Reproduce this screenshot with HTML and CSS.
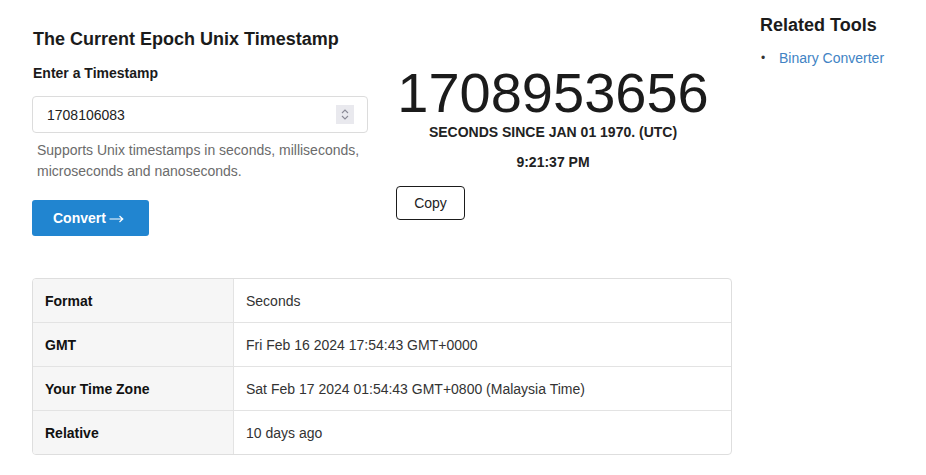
FILE: index.html
```html
<!DOCTYPE html>
<html lang="en">
<head>
<meta charset="utf-8">
<title>Epoch Unix Timestamp</title>
<link rel="stylesheet" href="styles.css">
</head>
<body>
<div class="page">
  <main class="main">
    <div class="top">
      <section class="left">
        <h1 class="title">The Current Epoch Unix Timestamp</h1>
        <label class="label" for="ts">Enter a Timestamp</label>
        <div class="input-wrap">
          <input id="ts" class="input" type="text" value="1708106083">
          <span class="spinner">
            <svg width="18" height="19" viewBox="0 0 18 19"><path d="M6 8 L9 5 L12 8" fill="none" stroke="#8a8a96" stroke-width="1.1"/><path d="M6 11 L9 14 L12 11" fill="none" stroke="#8a8a96" stroke-width="1.1"/></svg>
          </span>
        </div>
        <p class="help">Supports Unix timestamps in seconds, milliseconds, microseconds and nanoseconds.</p>
        <button class="convert">Convert <svg class="arrow" width="15" height="8" viewBox="0 0 15 8"><path d="M0.5 4 H13.5 M10.5 1 L13.8 4 L10.5 7" fill="none" stroke="#fff" stroke-width="1.2"/></svg></button>
      </section>
      <section class="center">
        <div class="big">1708953656</div>
        <div class="since">SECONDS SINCE JAN 01 1970. (UTC)</div>
        <div class="time">9:21:37 PM</div>
        <button class="copy">Copy</button>
      </section>
    </div>
    <table class="results">
      <tr><th>Format</th><td>Seconds</td></tr>
      <tr><th>GMT</th><td>Fri Feb 16 2024 17:54:43 GMT+0000</td></tr>
      <tr><th>Your Time Zone</th><td>Sat Feb 17 2024 01:54:43 GMT+0800 (Malaysia Time)</td></tr>
      <tr><th>Relative</th><td>10 days ago</td></tr>
    </table>
  </main>
  <aside class="side">
    <h2 class="side-title">Related Tools</h2>
    <ul class="side-list">
      <li><a href="#">Binary Converter</a></li>
    </ul>
  </aside>
</div>
</body>
</html>
```
FILE: styles.css
```css
* { box-sizing: border-box; }
html, body { margin: 0; padding: 0; background: #fff; }
body {
  font-family: "Liberation Sans", Arial, sans-serif;
  color: #1b1b1b;
  font-size: 14px;
}
.page {
  display: flex;
  align-items: flex-start;
}
.main {
  width: 700px;
  margin-left: 32px;
  padding-top: 28px;
}
.top {
  display: flex;
  align-items: flex-start;
}
.left {
  width: 336px;
}
.title {
  margin: 0 0 0 1px;
  font-size: 18px;
  line-height: 22px;
  font-weight: bold;
}
.label {
  display: block;
  margin: 14px 0 0 1px;
  font-size: 14px;
  line-height: 18px;
  font-weight: bold;
}
.input-wrap {
  position: relative;
  margin-top: 14px;
}
.input {
  display: block;
  width: 336px;
  height: 37px;
  border: 1px solid #dcdcdc;
  border-radius: 4px;
  padding: 0 14px;
  font-family: inherit;
  font-size: 14px;
  color: #222;
  outline: none;
}
.spinner {
  position: absolute;
  right: 14px;
  top: 9px;
  width: 18px;
  height: 19px;
  background: #e9e9ee;
  display: flex;
}
.help {
  margin: 7px 0 0 5px;
  color: #6b6b6b;
  font-size: 14px;
  line-height: 21px;
}
.convert {
  margin-top: 18px;
  width: 117px;
  height: 36px;
  border: none;
  border-radius: 3px;
  background: #2185d0;
  color: #fff;
  font-family: inherit;
  font-size: 14px;
  font-weight: bold;
  text-align: left;
  padding: 0 0 0 21px;
}
.arrow {
  vertical-align: 0px;
  margin-left: -1px;
}
.center {
  width: 314px;
  margin-left: 28px;
  padding-top: 37px;
  text-align: center;
}
.big {
  font-size: 56px;
  line-height: 56px;
  color: #1b1b1b;
}
.since {
  margin-top: 2px;
  font-size: 14px;
  line-height: 18px;
  font-weight: bold;
  color: #222;
}
.time {
  margin-top: 12px;
  font-size: 14px;
  line-height: 18px;
  font-weight: bold;
  color: #222;
}
.copy {
  display: block;
  margin-top: 15px;
  width: 69px;
  height: 34px;
  background: #fff;
  border: 1px solid #1b1b1b;
  border-radius: 4px;
  font-family: inherit;
  font-size: 14px;
  color: #222;
}
.results {
  margin-top: 42px;
  width: 700px;
  border-collapse: separate;
  border-spacing: 0;
  border: 1px solid #dedede;
  border-radius: 4px;
  overflow: hidden;
}
.results th, .results td {
  height: 44px;
  padding: 0 12px;
  text-align: left;
  font-size: 14px;
  border-top: 1px solid #e3e3e3;
}
.results tr:first-child th, .results tr:first-child td { border-top: none; height: 43px; }
.results th {
  width: 201px;
  background: #f6f6f6;
  font-weight: bold;
  color: #111;
  border-right: 1px solid #e3e3e3;
}
.results td {
  color: #333;
}
.side {
  margin-left: 28px;
  padding-top: 14px;
}
.side-title {
  margin: 0;
  font-size: 18px;
  line-height: 22px;
  font-weight: bold;
}
.side-list {
  list-style: none;
  margin: 12px 0 0 0;
  padding-left: 0;
  font-size: 14px;
  line-height: 20px;
}
.side-list li {
  display: flex;
}
.side-list li::before {
  content: "•";
  width: 18px;
  padding-left: 1px;
  color: #333;
  font-size: 12px;
}
.side-list a {
  color: #4183c4;
  text-decoration: none;
}
```
